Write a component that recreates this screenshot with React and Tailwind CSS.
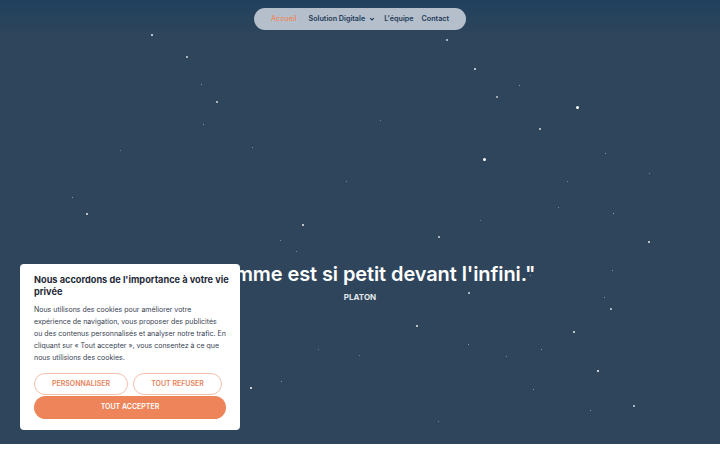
import React from "react";

const stars = [
  [152,35,2,0.9],[187,57,2,0.8],[447,40,2,0.8],[475,69,2,0.9],[217,102,2,0.8],[497,97,2,0.7],
  [577,107,3,1],[519,85,1,0.6],[201,84,1,0.6],[203,124,1,0.6],[540,129,2,0.8],[484,159,3,1],
  [605,153,1,0.6],[252,147,1,0.5],[346,181,1,0.5],[567,181,1,0.5],[72,197,1,0.6],[87,214,2,0.9],
  [613,213,1,0.7],[649,173,1,0.5],[303,225,2,0.9],[439,237,2,0.8],[649,242,2,0.9],[558,207,1,0.5],
  [296,251,1,0.5],[612,270,1,0.6],[280,240,1,0.5],[530,275,1,0.5],[604,297,1,0.6],[469,293,2,0.8],
  [611,309,2,0.8],[417,326,2,0.9],[574,332,2,0.9],[468,344,1,0.6],[541,349,1,0.6],[506,356,1,0.5],
  [598,371,2,1],[251,388,2,1],[281,381,1,0.6],[533,389,1,0.6],[634,406,2,0.8],[590,410,1,0.6],
  [438,421,1,0.5],[359,355,1,0.4],[318,349,1,0.4],[480,220,1,0.4],[380,120,1,0.4],[120,150,1,0.4]
];

export default function App() {
  return (
    <div className="w-[720px] h-[450px] bg-white overflow-hidden" style={{ fontFamily: "Inter, 'Noto Sans', sans-serif" }}>
      <div className="relative h-[444px] bg-[#2f455b] bg-gradient-to-b from-[#1f405e] via-[#2f455b] via-[8%] to-[#2f455b] flex flex-col items-center">
        {stars.map(([x, y, s, o], i) => (
          <div
            key={i}
            className="absolute rounded-full bg-white"
            style={{ left: x - s / 2, top: y - s / 2, width: s, height: s, opacity: o }}
          />
        ))}
        <nav className="relative mt-[8px] h-[22px] w-[212px] rounded-full bg-[#b4bfcb] flex items-center pl-[17px] text-[7.2px] font-semibold text-[#1e3a57]">
          <span className="text-[#ee8659] font-medium">Accueil</span>
          <span className="ml-[12px] flex items-center">
            Solution Digitale
            <svg width="6" height="6" viewBox="0 0 10 10" className="ml-[4px]">
              <path d="M2 3.5 L5 6.5 L8 3.5" stroke="#1e3a57" strokeWidth="1.8" fill="none" />
            </svg>
          </span>
          <span className="ml-[9px]">L'équipe</span>
          <span className="ml-[8px]">Contact</span>
        </nav>
        <div className="relative mt-[232px] text-[20px] font-semibold text-white leading-[24px] tracking-[-0.1px]">
          "L'homme est si petit devant l'infini."
        </div>
        <div className="relative mt-[5px] text-[8px] font-bold text-[#e5e9ee]">PLATON</div>

        <div className="absolute z-10 left-[20px] top-[264px] w-[220px] h-[166px] bg-white rounded-[4px] px-[14px] pt-[10px]">
          <div className="w-[200px] text-[9.2px] font-bold leading-[12px] text-[#1f2937]">
            Nous accordons de l'importance à votre vie privée
          </div>
          <p className="mt-[6px] text-[7px] leading-[12px] text-[#374151]">
            Nous utilisons des cookies pour améliorer votre expérience de navigation, vous proposer des publicités ou des contenus personnalisés et analyser notre trafic. En cliquant sur « Tout accepter », vous consentez à ce que nous utilisions des cookies.
          </p>
          <div className="mt-[9px] flex gap-[5px]">
            <button className="block w-[94px] h-[22px] rounded-full border border-[#f2c2ac] text-[#e8845c] text-[7px] font-semibold">PERSONNALISER</button>
            <button className="block w-[89px] h-[22px] rounded-full border border-[#f2c2ac] text-[#e8845c] text-[7px] font-semibold">TOUT REFUSER</button>
          </div>
          <button className="block mt-[1px] w-[192px] h-[23px] rounded-full bg-[#ee8459] text-white text-[7px] font-semibold">TOUT ACCEPTER</button>
        </div>
      </div>
    </div>
  );
}
